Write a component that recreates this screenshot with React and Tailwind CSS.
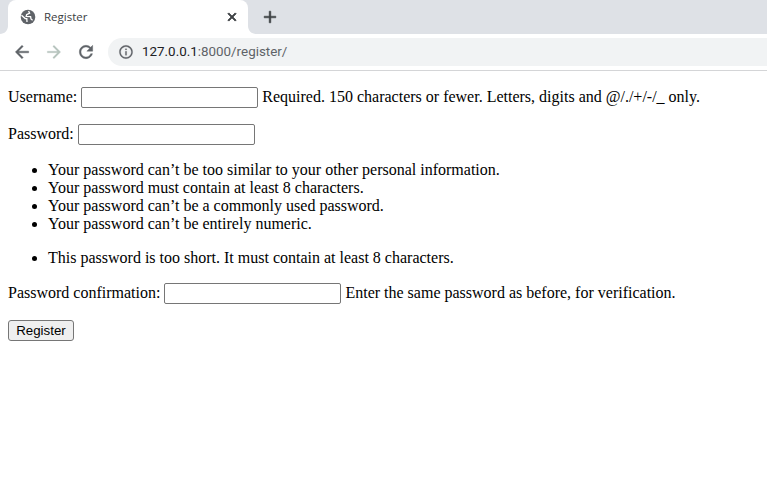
const Ic = ({ d, size = 20, color = "#5f6368", sw = 0, cls = "" }) => (
  <svg width={size} height={size} viewBox="0 0 24 24" fill={color} stroke={color} strokeWidth={sw} className={"shrink-0 " + cls}>
    <path d={d} />
  </svg>
);

const RELOAD = "M17.65 6.35C16.2 4.9 14.21 4 12 4c-4.42 0-7.99 3.58-7.99 8s3.57 8 7.99 8c3.73 0 6.84-2.55 7.73-6h-2.08c-.82 2.33-3.04 4-5.65 4-3.31 0-6-2.69-6-6s2.69-6 6-6c1.66 0 3.14.69 4.22 1.78L13 11h7V4l-2.35 2.35z";
const BACK = "M20 11H7.83l5.59-5.59L12 4l-8 8 8 8 1.41-1.41L7.83 13H20v-2z";
const FWD = "M12 4l-1.41 1.41L16.17 11H4v2h12.17l-5.58 5.59L12 20l8-8z";
const INFO = "M11 7h2v2h-2zm0 4h2v6h-2zm1-9C6.48 2 2 6.48 2 12s4.48 10 10 10 10-4.48 10-10S17.52 2 12 2zm0 18c-4.41 0-8-3.59-8-8s3.59-8 8-8 8 3.59 8 8-3.59 8-8 8z";
const CLOSE = "M19 6.41L17.59 5 12 10.59 6.41 5 5 6.41 10.59 12 5 17.59 6.41 19 12 13.41 17.59 19 19 17.59 13.41 12z";
const PLUS = "M19 13h-6v6h-2v-6H5v-2h6V5h2v6h6v2z";

const Globe = () => (
  <svg width="16" height="16" viewBox="0 0 16 16" className="shrink-0 mr-[8px]">
    <circle cx="8" cy="8" r="7.3" fill="#5f6368" />
    <path d="M1.5 6.2 L5.2 9.6 L6.8 9.6 L7 13 M8.6 2 L9.6 4.2 L6.6 5.6 L6.2 7.4 L10.6 7.6 L11 10 L12.6 11.2" fill="none" stroke="#fff" strokeWidth="1.3" />
  </svg>
);

const Field = ({ id }) => (
  <input
    id={id}
    type="text"
    className="w-[177px] h-[21px] border border-[#767676] rounded-[2px] bg-white align-top"
  />
);

export default function App() {
  return (
    <div className="min-h-[487px] bg-white text-black text-[16px] leading-[18px] font-['Liberation_Serif',serif]">
      <div className="h-[34px] bg-[#dee1e6] flex items-end pl-2">
        <div className="relative w-[240px] h-[34px] bg-white rounded-t-[8px] flex items-center pl-[12px] pr-2 font-['Open_Sans',sans-serif]">
          <svg width="8" height="8" viewBox="0 0 8 8" className="absolute left-[-8px] bottom-0">
            <path d="M8 0v8H0c4.4 0 8-3.6 8-8z" fill="#fff" />
          </svg>
          <svg width="8" height="8" viewBox="0 0 8 8" className="absolute right-[-8px] bottom-0">
            <path d="M0 0v8h8C3.6 8 0 4.4 0 0z" fill="#fff" />
          </svg>
          <Globe />
          <span className="text-[11.5px] leading-[16px] text-[#3c4043] flex-1">Register</span>
          <Ic d={CLOSE} size={14} color="#3c4043" sw={1.6} cls="mr-[1px]" />
        </div>
        <div className="h-[34px] flex items-center ml-[12px]">
          <Ic d={PLUS} size={20} color="#3c4043" sw={0.6} />
        </div>
      </div>

      <div className="h-[37px] bg-white border-b border-[#d4d5d7] flex items-center pl-3 pb-[1px]">
        <Ic d={BACK} size={20} sw={0.5} />
        <Ic d={FWD} size={20} color="#b6c4bd" sw={0.3} cls="ml-3" />
        <Ic d={RELOAD} size={20} sw={0.5} cls="ml-3" />
        <div className="ml-3 flex-1 h-[28px] bg-[#f1f3f4] rounded-l-[14px] flex items-center pl-[10px]">
          <Ic d={INFO} size={16} sw={0.3} />
          <span className="ml-2 text-[13.4px] leading-[18px] font-['Roboto',sans-serif] text-[#5f6368]">
            <span className="text-[#202124]">127.0.0.1</span>:8000/register/
          </span>
        </div>
      </div>

      <form className="px-2 pt-4">
        <p className="h-[21px] leading-[19px] mb-4">
          <label htmlFor="u">Username:</label> <Field id="u" /> Required. 150 characters or fewer. Letters, digits and @/./+/-/_ only.
        </p>
        <p className="h-[21px] leading-[19px] mb-4">
          <label htmlFor="p">Password:</label> <Field id="p" />
        </p>
        <ul className="list-disc pl-10 mb-4">
          <li>Your password can’t be too similar to your other personal information.</li>
          <li>Your password must contain at least 8 characters.</li>
          <li>Your password can’t be a commonly used password.</li>
          <li>Your password can’t be entirely numeric.</li>
        </ul>
        <ul className="list-disc pl-10 mb-4">
          <li>This password is too short. It must contain at least 8 characters.</li>
        </ul>
        <p className="h-[21px] leading-[19px] mb-4">
          <label htmlFor="c">Password confirmation:</label> <Field id="c" /> Enter the same password as before, for verification.
        </p>
        <button
          type="button"
          className="block w-[66px] h-[21px] border border-[#767676] rounded-[3px] bg-[#efefef] text-[13.33px] leading-[15px] font-['Liberation_Sans',sans-serif] text-black"
        >
          Register
        </button>
      </form>
    </div>
  );
}
